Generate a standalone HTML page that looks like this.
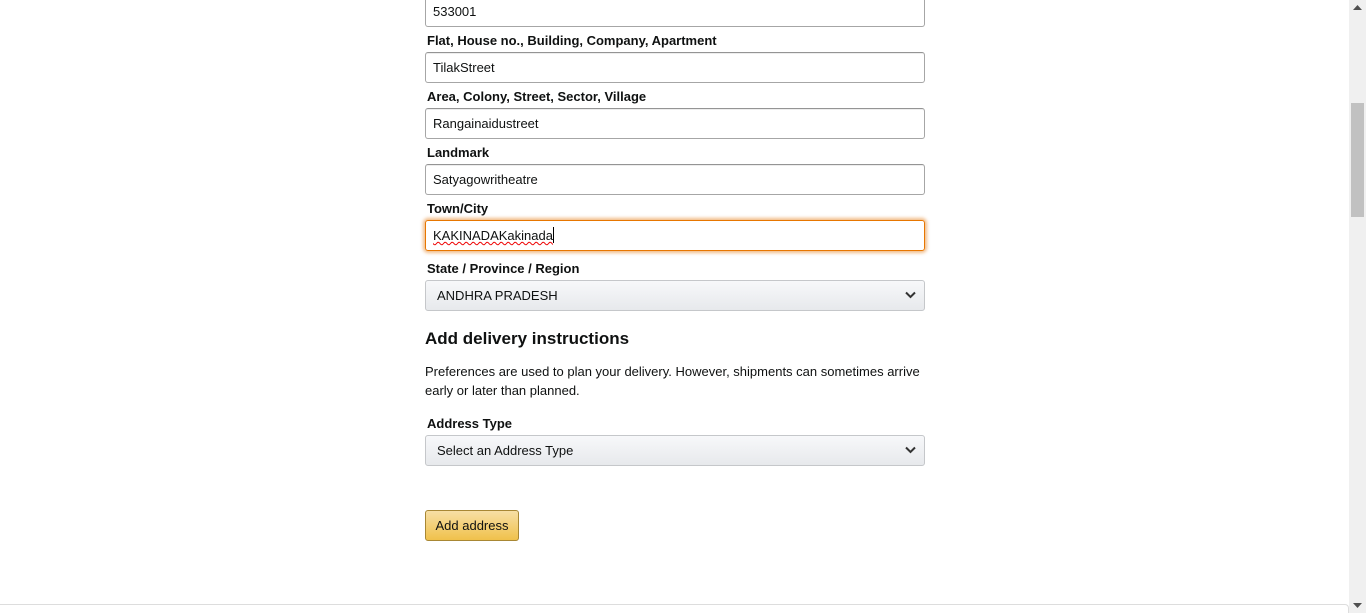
<!DOCTYPE html>
<html><head><meta charset="utf-8"><style>
body{margin:0;width:1366px;height:613px;overflow:hidden;background:#fff;font-family:"Liberation Sans",Arial,sans-serif;color:#0f1111;position:relative}
.a{position:absolute}
.lbl{position:absolute;left:427px;font-size:13px;font-weight:bold;white-space:nowrap}
.in{position:absolute;left:425px;border:1px solid #a6a6a6;border-top-color:#949494;border-radius:3px;box-shadow:0 1px 0 rgba(0,0,0,.07) inset;font-size:13px;line-height:29px;padding-left:7px;box-sizing:border-box;width:500px;height:31px}
.sel{position:absolute;left:425px;width:500px;height:31px;box-sizing:border-box;border:1px solid #c5c7ca;border-radius:3px;background:linear-gradient(#f7f8fa,#e7e9ec);font-size:13px;line-height:29px;padding-left:11px}
.sel svg{position:absolute;right:8px;top:10px}
</style></head><body>
<div class="in" style="top:-4px">533001</div>
<div class="lbl" style="top:33px">Flat, House no., Building, Company, Apartment</div>
<div class="in" style="top:52px">TilakStreet</div>
<div class="lbl" style="top:89px">Area, Colony, Street, Sector, Village</div>
<div class="in" style="top:108px">Rangainaidustreet</div>
<div class="lbl" style="top:145px">Landmark</div>
<div class="in" style="top:164px">Satyagowritheatre</div>
<div class="lbl" style="top:201px">Town/City</div>
<div class="in" style="top:220px;border-color:#e77600;box-shadow:0 0 3px 2px rgba(228,121,17,.5)"><span style="text-decoration:underline wavy #e00;text-decoration-thickness:1px">KAKINADAKakinada</span><span style="display:inline-block;width:1px;height:16px;background:#000;vertical-align:-3px"></span></div>
<div class="lbl" style="top:261px">State / Province / Region</div>
<div class="sel" style="top:280px">ANDHRA PRADESH<svg width="11" height="8" viewBox="0 0 11 8"><path d="M1 1.5l4.5 4.5 4.5-4.5" stroke="#333" stroke-width="2" fill="none"/></svg></div>
<div class="a" style="left:425px;top:329px;font-size:17px;font-weight:bold;white-space:nowrap">Add delivery instructions</div>
<div class="a" style="left:425px;top:362px;width:520px;font-size:13px;line-height:19px;white-space:nowrap">Preferences are used to plan your delivery. However, shipments can sometimes arrive<br>early or later than planned.</div>
<div class="lbl" style="top:416px">Address Type</div>
<div class="sel" style="top:435px">Select an Address Type<svg width="11" height="8" viewBox="0 0 11 8"><path d="M1 1.5l4.5 4.5 4.5-4.5" stroke="#333" stroke-width="2" fill="none"/></svg></div>
<div class="a" style="left:425px;top:510px;width:94px;height:31px;box-sizing:border-box;border:1px solid #a88734;border-radius:3px;background:linear-gradient(#f7dfa5,#f0c14b);font-size:13px;line-height:29px;text-align:center">Add address</div>
<div class="a" style="left:0;top:604px;width:1349px;height:9px;border-top:1px solid #ddd;border-right:1px solid #ddd;border-top-right-radius:4px;box-sizing:border-box"></div>
<div class="a" style="left:1349px;top:0;width:17px;height:613px;background:#f0f0f0"></div>
<div class="a" style="left:1351px;top:103px;width:13px;height:114px;background:#c1c1c1"></div>
<svg class="a" style="left:1353px;top:5px" width="9" height="5"><path d="M0 5L4.5 0 9 5z" fill="#505050"/></svg>
<svg class="a" style="left:1353px;top:603px" width="9" height="5"><path d="M0 0L4.5 5 9 0z" fill="#505050"/></svg>
</body></html>
